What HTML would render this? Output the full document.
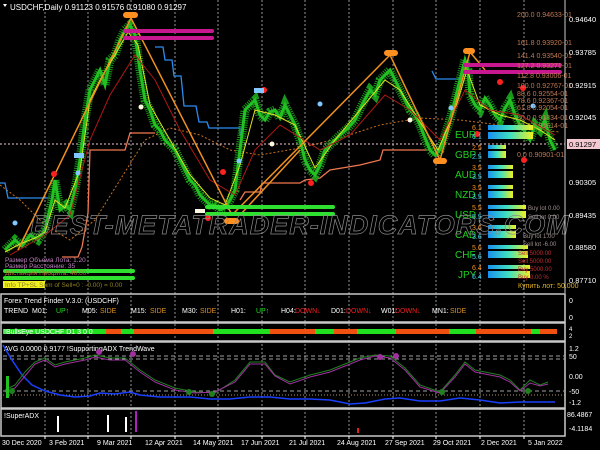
<!DOCTYPE html>
<html><head><meta charset="utf-8"><style>
html,body{margin:0;padding:0;background:#000;width:600px;height:450px;overflow:hidden}
svg{display:block}
text{font-family:"Liberation Sans",sans-serif}
</style></head><body>
<svg width="600" height="450" viewBox="0 0 600 450" xmlns="http://www.w3.org/2000/svg">
<rect width="600" height="450" fill="#000"/>
<g stroke="#bbb" stroke-width="0.8" stroke-dasharray="2,2">
<line x1="45" y1="0" x2="45" y2="436"/><line x1="88" y1="0" x2="88" y2="436"/><line x1="131" y1="0" x2="131" y2="436"/><line x1="175" y1="0" x2="175" y2="436"/><line x1="218" y1="0" x2="218" y2="436"/><line x1="262" y1="0" x2="262" y2="436"/><line x1="305" y1="0" x2="305" y2="436"/><line x1="349" y1="0" x2="349" y2="436"/><line x1="393" y1="0" x2="393" y2="436"/><line x1="436" y1="0" x2="436" y2="436"/><line x1="480" y1="0" x2="480" y2="436"/><line x1="524" y1="0" x2="524" y2="436"/>
</g>
<line x1="0" y1="144" x2="565" y2="144" stroke="#f0c8d0" stroke-width="1" stroke-dasharray="2,2"/>
<polyline fill="none" stroke="#2a8cf0" stroke-width="1.3" points="0,183 5,183 8,198 50,198"/>
<polyline fill="none" stroke="#2a8cf0" stroke-width="1.3" points="155,47 163,47 165,60 172,60 174,76 181,76 184,106 196,106 199,122 207,122 209,128 240,128 240,135"/>
<polyline fill="none" stroke="#2a8cf0" stroke-width="1.3" points="432,71 436,79 462,79"/>
<polyline fill="none" stroke="#2a8cf0" stroke-width="1.3" points="523,65 555,65"/>
<polyline fill="none" stroke="#f07850" stroke-width="1.3" points="62,257 78,257 82,247 88,213 90,150 125,150 130,133 155,133"/>
<polyline fill="none" stroke="#f07850" stroke-width="1.3" points="240,200 245,192 260,192 262,183 300,183 305,180 320,178 330,170 360,165 380,160 383,150 400,150 420,150 430,150"/>
<polyline fill="none" stroke="#c87020" stroke-width="1" stroke-dasharray="2,2" points="0,185 20,200 45,225 70,240 95,220 120,180 145,140 170,128 200,135 230,150 260,155 300,148 340,138 380,125 420,118 460,120 500,125 540,130 560,132"/>
<!-- candles -->
<polyline fill="none" stroke="#1a9a1a" stroke-width="9" stroke-dasharray="1,1.2" points="5,250 15,240 22,246 30,235 38,240 45,230 52,200 55,180 60,210 66,205 70,210 75,190 80,160 85,120 90,90 95,80 100,70 105,85 110,60 115,55 120,40 125,30 130,25 135,35 140,70 145,100 150,110 155,125 160,130 165,140 170,145 175,150 180,160 185,170 190,180 195,185 200,195 205,200 210,205 215,205 220,210 225,208 230,200 235,190 240,150 245,110 250,105 255,100 260,115 265,120 270,112 275,110 280,118 285,105 290,115 295,125 300,140 305,160 310,170 315,175 320,165 325,150 330,145 340,135 348,128 355,120 362,105 370,90 375,95 380,80 385,75 390,70 395,80 400,90 405,100 410,110 415,115 420,125 425,138 430,150 435,155 440,150 445,135 450,120 455,100 460,80 465,60 468,70 470,95 475,105 480,110 485,98 490,105 495,115 500,120 505,108 510,100 515,115 520,125 525,132 530,140 535,125 540,130 545,120 550,140 555,150"/>
<polyline fill="none" stroke="#22c022" stroke-width="3" points="5,250 15,240 22,246 30,235 38,240 45,230 52,200 55,180 60,210 66,205 70,210 75,190 80,160 85,120 90,90 95,80 100,70 105,85 110,60 115,55 120,40 125,30 130,25 135,35 140,70 145,100 150,110 155,125 160,130 165,140 170,145 175,150 180,160 185,170 190,180 195,185 200,195 205,200 210,205 215,205 220,210 225,208 230,200 235,190 240,150 245,110 250,105 255,100 260,115 265,120 270,112 275,110 280,118 285,105 290,115 295,125 300,140 305,160 310,170 315,175 320,165 325,150 330,145 340,135 348,128 355,120 362,105 370,90 375,95 380,80 385,75 390,70 395,80 400,90 405,100 410,110 415,115 420,125 425,138 430,150 435,155 440,150 445,135 450,120 455,100 460,80 465,60 468,70 470,95 475,105 480,110 485,98 490,105 495,115 500,120 505,108 510,100 515,115 520,125 525,132 530,140 535,125 540,130 545,120 550,140 555,150"/>
<polyline fill="none" stroke="#e0e020" stroke-width="1" points="5,252 20,244 35,238 45,232 55,200 65,208 80,170 90,100 100,80 115,55 128,32 138,45 150,105 170,140 190,175 210,198 225,205 240,165 255,110 275,115 295,125 315,168 335,140 360,110 385,80 400,90 420,122 438,150 455,110 467,70 480,105 500,115 520,120 540,130 555,140"/>
<polyline fill="none" stroke="#b01818" stroke-width="1" points="10,255 45,235 70,215 90,140 110,95 135,55 155,80 180,130 210,180 235,195 255,150 280,125 320,150 350,135 385,95 410,110 440,140 465,90 490,110 520,115 555,135"/>
<polyline fill="none" stroke="#f09020" stroke-width="1.5" points="18,250 131,18 232,215 390,55 440,160 470,52 485,70"/>
<line x1="240" y1="215" x2="300" y2="150" stroke="#f09020" stroke-width="1.5"/>
<g stroke-width="4" stroke-linecap="round">
<line x1="125" y1="31" x2="212" y2="31" stroke="#c81890"/><line x1="125" y1="38" x2="212" y2="38" stroke="#c81890"/>
<line x1="465" y1="65" x2="560" y2="65" stroke="#c81890"/><line x1="465" y1="72" x2="560" y2="72" stroke="#c81890"/>
<line x1="207" y1="207" x2="333" y2="207" stroke="#30e030"/><line x1="207" y1="214" x2="333" y2="214" stroke="#30e030"/>
<line x1="5" y1="271" x2="133" y2="271" stroke="#30e030"/><line x1="5" y1="278" x2="133" y2="278" stroke="#30e030"/>
</g>
<g fill="#ff2020"><circle cx="132" cy="15" r="3"/><circle cx="54" cy="174" r="3"/><circle cx="223" cy="172" r="3"/><circle cx="264" cy="90" r="3"/><circle cx="208" cy="218" r="3"/><circle cx="390" cy="53" r="3"/><circle cx="469" cy="51" r="3"/><circle cx="500" cy="82" r="3"/><circle cx="437" cy="161" r="3"/><circle cx="477" cy="134" r="3"/><circle cx="523" cy="88" r="3"/><circle cx="524" cy="160" r="3"/><circle cx="311" cy="183" r="3"/></g>
<g fill="#ff9020"><rect x="123" y="12" width="15" height="6" rx="3"/><rect x="224" y="218" width="15" height="6" rx="3"/><rect x="384" y="50" width="14" height="6" rx="3"/><rect x="463" y="48" width="12" height="6" rx="3"/><rect x="433" y="158" width="14" height="6" rx="3"/></g>
<g fill="#80c8ff"><rect x="74" y="153" width="10" height="5"/><rect x="254" y="88" width="10" height="5"/><circle cx="78" cy="173" r="2.5"/><circle cx="15" cy="223" r="2.5"/><circle cx="239" cy="161" r="2.5"/><circle cx="320" cy="104" r="2.5"/><circle cx="451" cy="108" r="2.5"/><circle cx="533" cy="106" r="2.5"/></g>
<g fill="#fff8e0"><rect x="195" y="209" width="10" height="4"/><circle cx="141" cy="107" r="2.5"/><circle cx="272" cy="144" r="2.5"/><circle cx="410" cy="120" r="2.5"/></g>
<g font-size="7" fill="#c07850">
<text x="517" y="17">200.0 0.94633-01</text><text x="517" y="45">161.8 0.93920-01</text><text x="517" y="58">141.4 0.93540-01</text><text x="517" y="68">127.2 0.93271-01</text><text x="517" y="78">112.8 0.93006-01</text><text x="517" y="88">100.0 0.92767-01</text><text x="517" y="96">88.6 0.92554-01</text><text x="517" y="103">78.6 0.92367-01</text><text x="517" y="110">61.8 0.92054-01</text><text x="517" y="120">50.0 0.91834-01</text><text x="517" y="128">38.2 0.91614-01</text><text x="517" y="157">0.0 0.90901-01</text>
</g>
<defs><linearGradient id="g1" x1="0" x2="1"><stop offset="0" stop-color="#1890f0"/><stop offset="0.5" stop-color="#40e0c0"/><stop offset="1" stop-color="#f0f020"/></linearGradient></defs>
<g font-size="10" fill="#20d020">
<text x="455" y="138">EUR</text><text x="455" y="158">GBP</text><text x="455" y="178">AUD</text><text x="455" y="198">NZD</text><text x="455" y="218">USD</text><text x="455" y="238">CAD</text><text x="455" y="258">CHF</text><text x="458" y="278">JPY</text>
</g>
<g font-size="7">
<text x="472" y="130" fill="#f09020">6.1</text><text x="472" y="139" fill="#40d0e0">6.1</text>
<text x="472" y="150" fill="#f09020">2.5</text><text x="472" y="159" fill="#40d0e0">2.5</text>
<text x="472" y="170" fill="#f09020">3.5</text><text x="472" y="179" fill="#40d0e0">3.5</text>
<text x="472" y="190" fill="#f09020">3.5</text><text x="472" y="199" fill="#40d0e0">3.5</text>
<text x="472" y="210" fill="#f09020">5.5</text><text x="472" y="219" fill="#40d0e0">5.5</text>
<text x="472" y="230" fill="#f09020">3.6</text><text x="472" y="239" fill="#40d0e0">3.6</text>
<text x="472" y="250" fill="#f09020">5.6</text><text x="472" y="259" fill="#40d0e0">5.6</text>
<text x="472" y="270" fill="#f09020">6.4</text><text x="472" y="279" fill="#40d0e0">6.4</text>
</g>
<g fill="url(#g1)">
<rect x="488" y="125" width="45" height="5"/><rect x="488" y="132" width="45" height="7"/>
<rect x="488" y="145" width="18" height="4"/><rect x="488" y="151" width="18" height="7"/>
<rect x="488" y="165" width="25" height="4"/><rect x="488" y="171" width="25" height="7"/>
<rect x="488" y="185" width="25" height="4"/><rect x="488" y="191" width="25" height="7"/>
<rect x="488" y="205" width="38" height="4"/><rect x="488" y="211" width="38" height="7"/>
<rect x="488" y="225" width="28" height="4"/><rect x="488" y="231" width="28" height="7"/>
<rect x="488" y="245" width="40" height="4"/><rect x="488" y="251" width="40" height="7"/>
<rect x="488" y="265" width="42" height="4"/><rect x="488" y="271" width="42" height="7"/>
</g>
<g font-size="6" fill="#a09090"><text x="528" y="210">Buy lot 0.00</text><text x="528" y="219">Sell lot 0.00</text><text x="523" y="238">Buy lot 1.00</text><text x="523" y="246">Sell lot -6.00</text></g>
<g font-size="6" fill="#c03030"><text x="518" y="255">Sell 5000.00</text><text x="518" y="263">Sell 5000.00</text><text x="518" y="271">Buy 5000.00</text><text x="518" y="279">Buy 0.00 %</text></g>
<text x="518" y="288" font-size="7" fill="#e0b020">Купить лот: 50.000</text>
<text x="300" y="234" text-anchor="middle" font-size="27" font-style="italic" font-weight="bold" fill="none" stroke="#8a8a8a" stroke-width="0.7" letter-spacing="1">BEST-METATRADER-INDICATORS.COM</text>
<g font-size="6.5"><text x="5" y="262" fill="#c080c0">Размер Объема Лота:  1.20</text><text x="5" y="268" fill="#c080c0">Размер Расстояние:  35</text><text x="5" y="275" fill="#b07030">Дистанция Профита:  40.00</text></g>
<rect x="3" y="281" width="42" height="7" fill="#f0f020"/>
<text x="5" y="287" font-size="6.5" fill="#908020">Info  TP+SL Sum of Sell=0 : -0.00) = 0.00</text>
<path d="M3,4 L7,4 L5,7 Z" fill="#fff"/>
<text x="10" y="10" font-size="8" fill="#fff">USDCHF,Daily  0.91123 0.91576 0.91080 0.91297</text>
<line x1="565" y1="0" x2="565" y2="293" stroke="#ccc" stroke-width="1"/>
<g font-size="7.5" fill="#fff">
<text x="569" y="22">0.94640</text><text x="569" y="55">0.93785</text><text x="569" y="88">0.92915</text><text x="569" y="120">0.92045</text><text x="569" y="185">0.90305</text><text x="569" y="218">0.89435</text><text x="569" y="250">0.88580</text><text x="569" y="283">0.87710</text>
</g>
<rect x="567" y="139" width="33" height="10" fill="#f4c8d0"/>
<text x="569" y="147" font-size="7.5" fill="#000">0.91297</text>
<g fill="none" stroke="#c8c8c8" stroke-width="1.5">
<rect x="1" y="294" width="564" height="28"/>
<rect x="1" y="323" width="564" height="18"/>
<rect x="1" y="342" width="564" height="66"/>
<rect x="1" y="409" width="564" height="27"/>
</g>
<line x1="565" y1="294" x2="565" y2="436" stroke="#ccc"/>
<g font-size="7">
<text x="4" y="303" fill="#fff">Forex Trend Finder V.3.0: (USDCHF)</text>
<text x="4" y="313" fill="#fff">TREND</text><text x="32" y="313" fill="#fff">M01:</text><text x="56" y="313" fill="#20e020">UP↑</text>
<text x="82" y="313" fill="#fff">M05:</text><text x="100" y="313" fill="#e09020">SIDE</text>
<text x="131" y="313" fill="#fff">M15:</text><text x="150" y="313" fill="#e09020">SIDE</text>
<text x="182" y="313" fill="#fff">M30:</text><text x="200" y="313" fill="#e09020">SIDE</text>
<text x="231" y="313" fill="#fff">H01:</text><text x="256" y="313" fill="#20e020">UP↑</text>
<text x="281" y="313" fill="#fff">H04:</text><text x="295" y="313" fill="#f02020">DOWN↓</text>
<text x="331" y="313" fill="#fff">D01:</text><text x="346" y="313" fill="#f02020">DOWN↓</text>
<text x="381" y="313" fill="#fff">W01:</text><text x="395" y="313" fill="#f02020">DOWN↓</text>
<text x="432" y="313" fill="#fff">MN1:</text><text x="450" y="313" fill="#e09020">SIDE</text>
</g>
<g font-size="7" fill="#fff"><text x="569" y="303">0</text><text x="569" y="320">0</text></g>
<g>
<rect x="3" y="329" width="103" height="5" fill="#20e020"/><rect x="106" y="329" width="15" height="5" fill="#f05010"/><rect x="121" y="329" width="13" height="5" fill="#20e020"/><rect x="134" y="329" width="79" height="5" fill="#f05010"/><rect x="213" y="329" width="57" height="5" fill="#20e020"/><rect x="270" y="329" width="45" height="5" fill="#f05010"/><rect x="315" y="329" width="19" height="5" fill="#20e020"/><rect x="334" y="329" width="23" height="5" fill="#f05010"/><rect x="357" y="329" width="39" height="5" fill="#20e020"/><rect x="396" y="329" width="53" height="5" fill="#f05010"/><rect x="449" y="329" width="27" height="5" fill="#20e020"/><rect x="476" y="329" width="55" height="5" fill="#f05010"/><rect x="531" y="329" width="9" height="5" fill="#20e020"/><rect x="540" y="329" width="17" height="5" fill="#f05010"/>
</g>
<text x="4" y="334" font-size="7" fill="#fff">!BullsEye USDCHF D1 3 0 0</text>
<g font-size="6" fill="#fff"><text x="569" y="331">4</text><text x="569" y="338">2</text></g>
<g stroke="#a0a0a0" stroke-width="1" stroke-dasharray="4,3"><line x1="3" y1="356" x2="565" y2="356"/><line x1="3" y1="359" x2="565" y2="359"/><line x1="3" y1="391" x2="565" y2="391"/></g>
<line x1="3" y1="395" x2="565" y2="395" stroke="#e0c080" stroke-width="0.8" stroke-dasharray="1,2"/>
<text x="4" y="351" font-size="7" fill="#fff">AVG 0.0000 0.9177 !SupportingADX  TrendWave</text>
<polyline fill="none" stroke="#1a40ff" stroke-width="1.5" points="3,345 12,360 22,375 32,385 45,391 60,395 75,397 90,396 100,393 115,394 130,392 140,395 160,397 190,397 210,399 230,399 250,397 270,397 290,399 310,399 330,400 350,404 365,403 385,399 400,398 420,401 440,401 460,398 480,400 500,403 520,402 540,402 555,402"/>
<polyline fill="none" stroke="#208020" stroke-width="1" points="5,390 15,385 25,372 35,362 45,358 55,365 65,362 75,360 85,358 95,355 110,358 125,358 140,370 155,380 175,388 195,392 215,393 235,380 250,362 265,362 275,375 290,382 310,375 330,370 345,364 360,358 375,355 390,356 405,368 420,385 440,392 455,375 465,362 475,370 490,373 500,375 510,380 520,390 530,380 540,385 548,382"/>
<polyline fill="none" stroke="#a030a0" stroke-width="1" points="5,392 15,388 25,376 35,364 45,360 55,367 65,364 75,362 85,360 95,357 110,360 125,360 140,372 155,382 175,390 195,393 215,392 235,382 250,364 265,364 275,376 290,384 310,377 330,372 345,366 360,360 375,356 390,358 405,370 420,387 440,393 455,377 465,364 475,372 490,375 500,377 510,382 520,391 530,383 540,386 548,384"/>
<g fill="#a030a0"><circle cx="99" cy="352" r="3"/><circle cx="133" cy="354" r="3"/><circle cx="380" cy="357" r="3"/><circle cx="396" cy="356" r="3"/></g>
<g fill="#208020"><circle cx="12" cy="391" r="3"/><circle cx="189" cy="392" r="3"/><circle cx="212" cy="394" r="3"/><circle cx="442" cy="392" r="3"/><circle cx="528" cy="391" r="3"/></g>
<rect x="6" y="376" width="3" height="22" fill="#20c020"/>
<g font-size="7" fill="#fff"><text x="569" y="351">1.2</text><text x="569" y="359">50</text><text x="569" y="379">0.00</text><text x="569" y="394">-50</text><text x="569" y="405">-1.2</text></g>
<text x="4" y="418" font-size="7" fill="#fff">!SuperADX</text>
<rect x="57" y="416" width="2" height="16" fill="#fff"/><rect x="107" y="415" width="2" height="17" fill="#fff"/><rect x="125" y="417" width="2" height="15" fill="#fff"/><rect x="135" y="411" width="2" height="21" fill="#b020c0"/><rect x="357" y="428" width="2" height="5" fill="#e02020"/>
<g font-size="7" fill="#fff"><text x="567" y="417">86.4867</text><text x="569" y="431">-4.1184</text></g>
<g font-size="7" fill="#fff">
<text x="2" y="445">30 Dec 2020</text><text x="49" y="445">3 Feb 2021</text><text x="97" y="445">9 Mar 2021</text><text x="145" y="445">12 Apr 2021</text><text x="193" y="445">14 May 2021</text><text x="241" y="445">17 Jun 2021</text><text x="289" y="445">21 Jul 2021</text><text x="337" y="445">24 Aug 2021</text><text x="385" y="445">27 Sep 2021</text><text x="433" y="445">29 Oct 2021</text><text x="481" y="445">2 Dec 2021</text><text x="528" y="445">5 Jan 2022</text>
</g>
<g stroke="#fff" stroke-width="1"><line x1="45" y1="436" x2="45" y2="439"/><line x1="88" y1="436" x2="88" y2="439"/><line x1="131" y1="436" x2="131" y2="439"/><line x1="175" y1="436" x2="175" y2="439"/><line x1="218" y1="436" x2="218" y2="439"/><line x1="262" y1="436" x2="262" y2="439"/><line x1="305" y1="436" x2="305" y2="439"/><line x1="349" y1="436" x2="349" y2="439"/><line x1="393" y1="436" x2="393" y2="439"/><line x1="436" y1="436" x2="436" y2="439"/><line x1="480" y1="436" x2="480" y2="439"/><line x1="524" y1="436" x2="524" y2="439"/></g>
</svg>
</body></html>
